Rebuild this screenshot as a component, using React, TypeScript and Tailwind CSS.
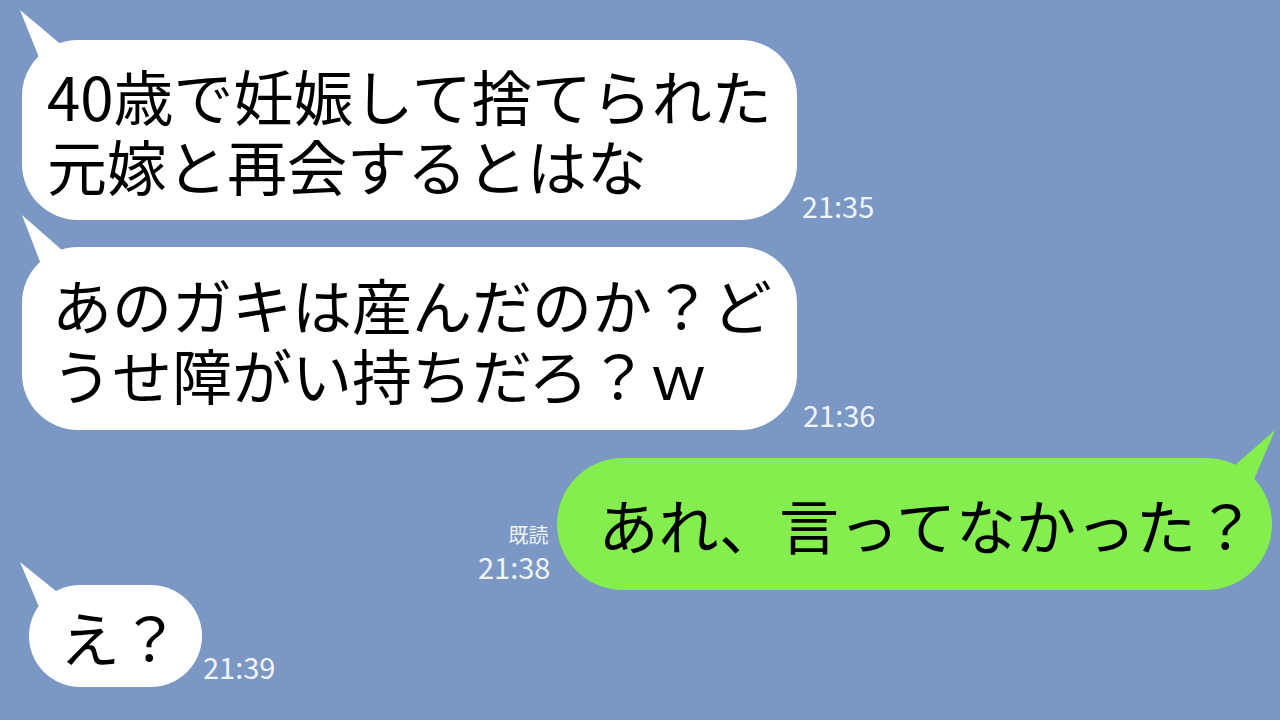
import React from "react";

const font = { fontFamily: '"Noto Sans CJK JP", "Noto Sans", sans-serif' };

function LeftTail({ points }: { points: string }) {
  return (
    <svg
      className="absolute left-0 top-0"
      width="1"
      height="1"
      style={{ overflow: "visible" }}
    >
      <polygon points={points} fill="#ffffff" />
    </svg>
  );
}

export default function App() {
  return (
    <div
      className="w-[1280px] h-[720px] overflow-hidden bg-[#7a98c3] flex flex-col pt-[40px] text-black"
      style={font}
    >
      {/* Message 1 */}
      <div className="flex items-end pl-[22px]">
        <div className="relative bg-white rounded-[56px] pl-[25px] pr-[25px] pt-[20px] pb-[20px] text-[60px] leading-[70px] whitespace-nowrap">
          <LeftTail points="-2,-30 22,30 48,12" />
          <span className="relative">40歳で妊娠して捨てられた</span>
          <br />
          <span className="relative">元嫁と再会するとはな</span>
        </div>
        <div className="ml-[5px] mb-[0px] text-[29px] leading-none text-[#f0f3f8]">21:35</div>
      </div>

      {/* Message 2 */}
      <div className="flex items-end pl-[22px] mt-[27px]">
        <div className="relative bg-white rounded-[56px] pl-[30px] pr-[25px] pt-[22px] pb-[21px] text-[60px] leading-[70px] whitespace-nowrap">
          <LeftTail points="0,-32 27,38 57,18" />
          <span className="relative">あのガキは産んだのか？ど</span>
          <br />
          <span className="relative">うせ障がい持ちだろ？ｗ</span>
        </div>
        <div className="ml-[6px] mb-[1px] text-[29px] leading-none text-[#f0f3f8]">21:36</div>
      </div>

      {/* Message 3 (sent) */}
      <div className="flex items-end justify-end pr-[8px] mt-[28px]">
        <div className="mr-[7px] mb-[9px] flex flex-col items-end text-[#f0f3f8]">
          <div className="text-[20px] leading-none mb-[7px] mr-[2px]">既読</div>
          <div className="text-[29px] leading-none">21:38</div>
        </div>
        <div className="relative bg-[#85ee4f] rounded-[66px] pl-[41px] pr-[16px] py-[31px] text-[60px] leading-[70px] whitespace-nowrap">
          <svg
            className="absolute right-0 top-0"
            width="1"
            height="1"
            style={{ overflow: "visible" }}
          >
            <polygon points="3,-28 -54,22 -25,38" fill="#85ee4f" transform="translate(1,0)" />
          </svg>
          <span className="relative">あれ、言ってなかった？</span>
        </div>
      </div>

      {/* Message 4 */}
      <div className="flex items-end pl-[29px] mt-[-5px]">
        <div className="relative bg-white rounded-[51px] pl-[31px] pr-[22px] py-[16px] text-[60px] leading-[70px] whitespace-nowrap">
          <LeftTail points="-9,-23 18,41 43,19" />
          <span className="relative">え？</span>
        </div>
        <div className="ml-[1px] mb-[6px] text-[29px] leading-none text-[#f0f3f8]">21:39</div>
      </div>
    </div>
  );
}
